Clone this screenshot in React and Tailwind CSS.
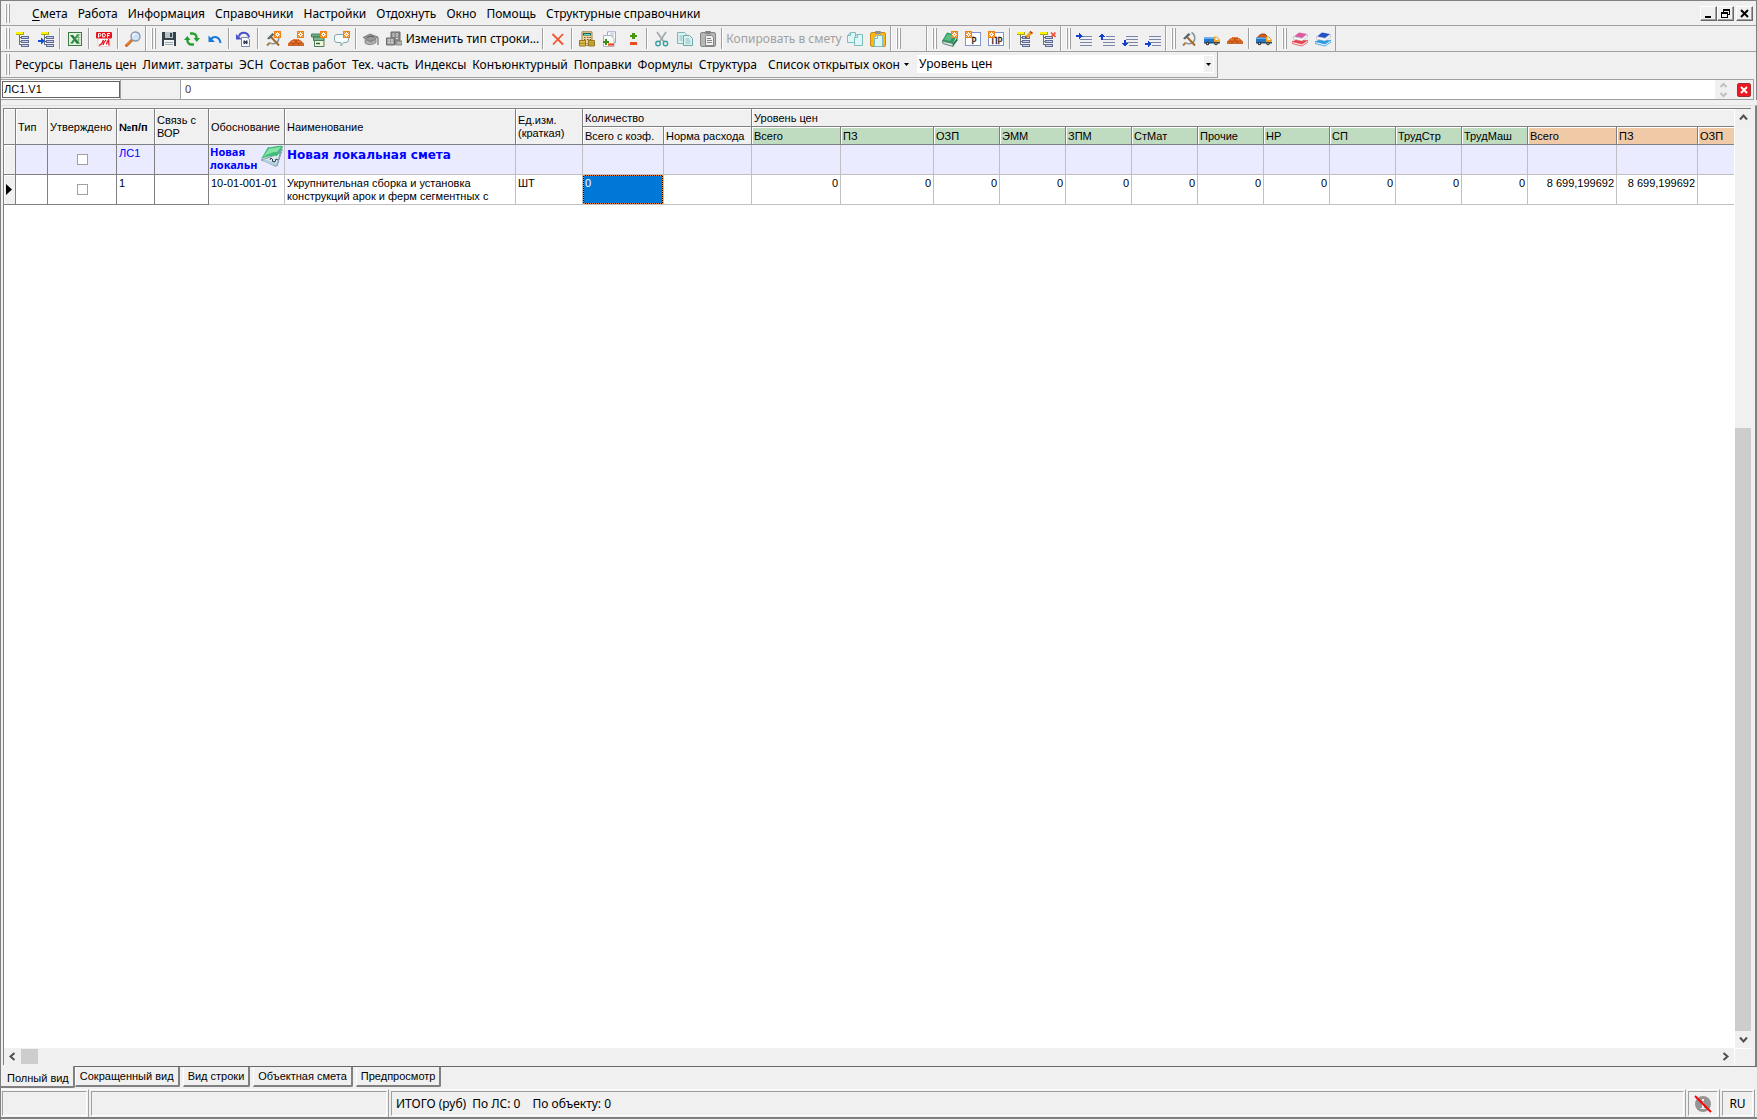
import { useState } from "react";
import clsx from "clsx";

const menuItems = ["Работа", "Информация", "Справочники", "Настройки", "Отдохнуть", "Окно", "Помощь", "Структурные справочники"];

const panelItems = [
    "Ресурсы", "Панель цен", "Лимит. затраты", "ЭСН", "Состав работ", "Тех. часть",
    "Индексы", "Конъюнктурный", "Поправки", "Формулы", "Структура",
];

const baseColumns = ["Всего", "ПЗ", "ОЗП", "ЭММ", "ЗПМ", "СтМат", "Прочие", "НР", "СП", "ТрудСтр", "ТрудМаш"];
const currentColumns = ["Всего", "ПЗ", "ОЗП"];
const currentValues = ["8 699,199692", "8 699,199692", ""];

const viewTabs = ["Полный вид", "Сокращенный вид", "Вид строки", "Объектная смета", "Предпросмотр"];

/* ---------- icons ---------- */

function Svg({ children, crisp }) {
    return (
        <svg width="16" height="16" viewBox="0 0 16 16" fill="none" shapeRendering={crisp ? "crispEdges" : "auto"} aria-hidden="true">
            {children}
        </svg>
    );
}

function Badge({ x = 9, y = 0 }) {
    return (
        <g transform={`translate(${x} ${y})`}>
            <rect width="7" height="7" fill="#f08010" />
            <path d="M3.5 1v5M1 3.5h5M1.5 1.5l4 4M5.5 1.5l-4 4" stroke="#fff" strokeWidth="0.9" />
            <rect x="3" y="3" width="1" height="1" fill="#f08010" />
        </g>
    );
}

function TreeShape({ x = 0 }) {
    return (
        <g transform={`translate(${x} 0)`} shapeRendering="crispEdges">
            <rect x="0" y="1" width="8" height="3" fill="#a8a820" />
            <rect x="0" y="1" width="7" height="2" fill="#fdf500" />
            <path d="M3.5 4v9.5M3 6.5h3M3 10.5h3M3 13.5h3" stroke="#707070" />
            <rect x="5" y="5" width="8" height="3" fill="#5d6a94" />
            <rect x="6" y="6" width="6" height="1" fill="#c8d4f4" />
            <rect x="5" y="9" width="8" height="3" fill="#5d6a94" />
            <rect x="6" y="10" width="6" height="1" fill="#c8d4f4" />
            <rect x="5" y="13" width="8" height="3" fill="#5d6a94" />
            <rect x="6" y="14" width="6" height="1" fill="#c8d4f4" />
        </g>
    );
}

const TreeIcon = () => <Svg><TreeShape x={1} /></Svg>;
const TreeArrowIcon = () => (
    <Svg>
        <TreeShape x={3} />
        <path d="M0 9h3V6.5L7 10l-4 3.5V11H0z" fill="#0f50d8" />
    </Svg>
);
const TreePencilIcon = () => (
    <Svg>
        <TreeShape />
        <path d="M8 7l1-2.5L13.5 0 16 2l-4.5 4.5z" fill="#f0a020" />
        <path d="M13 .5L15.5 2.5" stroke="#c03010" strokeWidth="1.5" />
        <path d="M8 7l.8-2 1.2 1.2z" fill="#222" />
    </Svg>
);
const TreeDeleteIcon = () => (
    <Svg>
        <TreeShape />
        <path d="M11 1.5l4.500 4.500M15.500 1.500L11 6" stroke="#f04a30" strokeWidth="1.600" />
    </Svg>
);
const ExcelIcon = () => (
    <Svg>
        <rect x="1.5" y="1.5" width="13" height="13" fill="#e6f3e4" stroke="#3c7c3e" />
        <path d="M9.5 4h4M9.5 6.5h4M9.5 9h4M9.5 12h4M11.5 3v10" stroke="#86b585" />
        <path d="M3 4h3l6.5 8.5H9.5z" fill="#1f7a36" />
        <path d="M10 3.5h2L6 12.5H3z" fill="#2f9446" />
    </Svg>
);
const PdfIcon = () => (
    <Svg>
        <path d="M2 7h9l3 3v5.500H2z" fill="#fff" stroke="#e6b4b0" strokeWidth=".6" />
        <rect x="0" y="1" width="16" height="6.500" rx="1" fill="#e8141c" />
        <path d="M2.500 6.500V2.500h1.200a1.200 1.200 0 010 2.600H2.500M6.700 2.500h1a1.600 1.600 0 010 3.500h-1zM11.500 6.500V2.500H14M11.500 4.500h2" stroke="#fff" strokeWidth="1" />
        <path d="M3 14.500c2.500-1 4-3.500 4.500-5.500M7 14c.8-2.400 2-4.400 3.200-5M10.500 13.500c.3-2 1-3.500 2-4.500l.5 5.500" stroke="#e01820" strokeWidth="1.300" />
    </Svg>
);
const SearchIcon = () => (
    <Svg>
        <path d="M6.500 9.500l-5 5" stroke="#d2691e" strokeWidth="3" strokeLinecap="round" />
        <path d="M6 9.500L2 13.500" stroke="#f4a860" strokeWidth="1" />
        <circle cx="10.500" cy="5.500" r="4.500" fill="#cfe4f8" stroke="#8a94a8" strokeWidth="1.300" />
        <path d="M7.700 5a3 3 0 013-2.500" stroke="#fff" strokeWidth="1.200" />
    </Svg>
);
const SaveIcon = () => (
    <Svg crisp>
        <path d="M1 1h13l1 1v13H1z" fill="#36424c" />
        <rect x="4" y="1" width="8" height="6" fill="#bcc4c8" />
        <rect x="9" y="2" width="2" height="4" fill="#36424c" />
        <rect x="3" y="9" width="10" height="6" fill="#f4f4f4" />
        <path d="M4 11.500h8M4 13.500h8" stroke="#9aa4aa" />
    </Svg>
);
const RefreshIcon = () => (
    <Svg>
        <path d="M6 2.500h2.500a4 4 0 014 4v1" stroke="#28a030" strokeWidth="2.400" />
        <path d="M9.500 7h6.500l-3.200 4z" fill="#28a030" />
        <path d="M10 13.500H7.500a4 4 0 01-4-4v-1" stroke="#28a030" strokeWidth="2.400" />
        <path d="M0 9h6.500L3.300 5z" fill="#28a030" />
    </Svg>
);
const UndoIcon = () => (
    <Svg>
        <path d="M4 8C7 4.500 12.500 5.500 13.500 12" stroke="#1878e0" strokeWidth="2" />
        <path d="M1.500 4.500V11h6.500z" fill="#1878e0" />
    </Svg>
);
const DocUndoIcon = () => (
    <Svg>
        <path d="M3 5.500C4 .5 12 .2 13 6.500" stroke="#4a50c8" strokeWidth="2" />
        <path d="M0 3v5.500h6z" fill="#4a50c8" />
        <path d="M5.500 6.500H11l2.500 2v7h-8z" fill="#fff" stroke="#7a84b0" />
        <path d="M7.700 9.500l3.600 3.600M11.300 9.500l-3.600 3.600M7 11.300h5" stroke="#30385c" strokeWidth="1.100" />
    </Svg>
);
const HammerShape = () => (
    <>
        <path d="M10.500 1.500c4.500 2.500 4.500 9.500-1 11-2 .5-4 0-5.500-1" stroke="#84949a" strokeWidth="1.500" />
        <path d="M2 14.500l2.500-2.500" stroke="#b57a32" strokeWidth="2" />
        <path d="M5.500 5.500L14 14.500" stroke="#a86a28" strokeWidth="2" />
        <path d="M2 7.500L7.500 2l2 1.500L4 8.500z" fill="#586a70" />
    </>
);
const HammerIcon = () => <Svg><HammerShape /></Svg>;
const HammerNewIcon = () => <Svg><HammerShape /><Badge /></Svg>;
const BricksShape = ({ y = 0 }) => (
    <g transform={`translate(0 ${y})`}>
        <path d="M0 14.500V12l2-.5V10l3-.5V8h6v1.500l3 .5v1.500l2 .5v2.500z" fill="#e87028" />
        <path d="M0 14.300h16M1 12h14M3 9.900h10M5 12v2M10.500 12v2M8 10v2M8 8v1.500" stroke="#a63f08" strokeWidth=".8" />
        <path d="M6 8.600h4M3 10.800h4M9 10.800h4" stroke="#ff9c50" strokeWidth=".6" />
    </g>
);
const BricksIcon = () => <Svg><BricksShape y={-2} /></Svg>;
const BricksNewIcon = () => <Svg><BricksShape /><Badge /></Svg>;
const BoxNewIcon = () => (
    <Svg>
        <path d="M.5 3H12v3H.5z" fill="#6fae84" stroke="#2f7048" strokeWidth=".8" />
        <path d="M2.500 6H13v3.500H2.500z" fill="#7db38f" stroke="#3d7850" />
        <path d="M3.500 9.500h9.500v6H3.500z" fill="#f2f4d8" stroke="#4c7c58" />
        <path d="M5 12.500h4" stroke="#285c38" strokeWidth="1.400" />
        <Badge />
    </Svg>
);
const BalloonNewIcon = () => (
    <Svg>
        <path d="M3 3.500h9a2.500 2.500 0 012.500 2.500v3a2.500 2.500 0 01-2.500 2.500H9.500L7 15v-3.500H3A2.500 2.500 0 01.5 9V6A2.500 2.500 0 013 3.500z" fill="#f7fdff" stroke="#86a5aa" />
        <Badge />
    </Svg>
);
const GraduationIcon = () => (
    <Svg>
        <path d="M0 6.500l7-3.500 8 3-7 4.500z" fill="#9a9a9a" stroke="#666" strokeWidth=".7" />
        <path d="M2 8.500v3.500c3 2.500 8 2 11-.5V8l-5 3z" fill="#b0b0b0" stroke="#707070" strokeWidth=".7" />
        <path d="M4 6.500l4-1.500 3 1.200M15 6.500v7.500" stroke="#555" />
    </Svg>
);
const BuildingIcon = () => (
    <Svg>
        <path d="M5 1h9v12H5z" fill="#8c8c8c" stroke="#6a6a6a" />
        <path d="M.5 7h8v7h-8z" fill="#a2a2a2" stroke="#6a6a6a" />
        <path d="M6.500 3h2M10 3h2M6.500 5h2M10 5h2M10 7.500h2M2 9h2M5 9h2M2 11.500h2M5 11.500h2" stroke="#e0e0e0" />
        <path d="M10 10h6v4h-6z" fill="#b4b4b4" stroke="#6a6a6a" strokeWidth=".7" />
    </Svg>
);
const DeleteIcon = () => (
    <Svg>
        <path d="M2.500 3L13 13.500" stroke="#f2542e" strokeWidth="1.800" />
        <path d="M13 3L3 13.500" stroke="#f2542e" strokeWidth="1.800" />
    </Svg>
);
const CalcIcon = () => (
    <Svg>
        <path d="M3 .8h10v12H3z" fill="#efd7a0" stroke="#9b8047" />
        <rect x="4" y="2" width="8" height="2.500" fill="#1c5f58" />
        <rect x="5" y="3" width="6" height="1" fill="#45e0d0" />
        <path d="M5 6.500h1.500M8 6.500h1.500M10.500 6.500h1.500M5 8.700h1.500M8 8.700h1.500M10.500 8.700h1.500" stroke="#7c6134" strokeWidth="1.200" />
        <path d="M.5 9.500h6V15h-6zM9.500 9.500h6V15h-6z" fill="#e2be45" stroke="#947522" />
        <path d="M1 12.300h5M10 11.300h5M10 13.300h5M7 14.500h2" stroke="#947522" strokeWidth=".8" />
    </Svg>
);
const DocPlusMinusIcon = () => (
    <Svg>
        <path d="M5.500.8h8v11h-8z" fill="#fff" stroke="#a0a8c4" />
        <path d="M1.500 4.500H9l3 3v8H1.500z" fill="#f8f8f8" stroke="#b0b4b8" />
        <path d="M8 3h4M9 5h3" stroke="#a0b0e0" />
        <path d="M4 8v6M1 11h6" stroke="#3b8e12" strokeWidth="2" />
        <path d="M6 13.500h6" stroke="#f0441c" strokeWidth="2.200" />
    </Svg>
);
const PlusMinusIcon = () => (
    <Svg crisp>
        <path d="M7 2h3v2h2v2h-2v2H7V6H5V4h2z" fill="#4c9412" />
        <rect x="5" y="11" width="7" height="3" fill="#ef4b20" />
    </Svg>
);
const ScissorsIcon = () => (
    <Svg>
        <path d="M3 1l7 10M12 1L5.500 11" stroke="#9fa9ac" strokeWidth="1.600" />
        <circle cx="4" cy="12.500" r="2.200" stroke="#38a0a4" strokeWidth="1.400" />
        <circle cx="11.500" cy="12.500" r="2.200" stroke="#38a0a4" strokeWidth="1.400" />
    </Svg>
);
const CopyIcon = () => (
    <Svg>
        <path d="M.5 1.500h7l2 2v9h-9z" fill="#d9f3f3" stroke="#7bb6b8" />
        <path d="M6.500 4.500h6l3 3v7h-9z" fill="#d9f3f3" stroke="#69a7aa" />
        <path d="M2.500 5h3M2.500 7h3M2.500 9h3M8.500 8h4M8.500 10h5M8.500 12h5" stroke="#8bbcbd" />
    </Svg>
);
const CopyPlainIcon = () => (
    <Svg>
        <path d="M3.500 1.500h5v10h-8v-7z" fill="#dcf7f6" stroke="#7fbcbd" />
        <path d="M9.500 3.500h6v11h-8v-8z" fill="#dcf7f6" stroke="#7fbcbd" />
        <path d="M.5 4.500h3v-3M7.500 6.500h3v-3" stroke="#7fbcbd" />
    </Svg>
);
const PasteGrayIcon = () => (
    <Svg>
        <rect x=".5" y="1.500" width="15" height="14" rx="1.500" fill="#b6b6b6" stroke="#858585" />
        <rect x="5" y="0" width="6" height="3" rx="1" fill="#858585" />
        <path d="M6.500 4.500h5l2 2v8h-8v-9z" fill="#f1f1f1" stroke="#858585" />
        <path d="M7 7.500h4M7 9.500h5M7 11.500h5" stroke="#858585" />
    </Svg>
);
const PasteIcon = () => (
    <Svg>
        <rect x=".5" y="1.500" width="15" height="14" rx="1.500" fill="#ffb60e" stroke="#c98a1b" />
        <rect x="5" y="0" width="6" height="3" rx="1" fill="#8a9094" />
        <path d="M6.500 4.500h6v11h-8v-9z" fill="#dcf7f6" stroke="#7fbcbd" />
        <path d="M4.500 7.500h3v-3" stroke="#7fbcbd" />
    </Svg>
);
const BookNewIcon = () => (
    <Svg>
        <path d="M0 10l5-8.500L15 4l-4 8.500z" fill="#2f9a62" />
        <path d="M2 8.500l4-5.500 5 2-3 5z" fill="#5cbd86" />
        <path d="M0 10l11 2.500v3L1 12.500z" fill="#dce6e0" stroke="#3c6c58" strokeWidth=".8" />
        <path d="M11 12.500L15.500 6v3.500L11 15.500z" fill="#24704a" />
        <Badge />
    </Svg>
);
function LetterIcon({ text }) {
    return (
        <Svg>
            <rect x=".5" y="1.500" width="15" height="13" fill="#fff" stroke="#8295c8" />
            <text x={9} y="13" textAnchor="middle" fontSize="8" fill="#111" stroke="#111" strokeWidth=".3" fontFamily="'DejaVu Sans', sans-serif">{text}</text>
            <Badge x={0} />
        </Svg>
    );
}
/* paragraph indent glyphs, the arrow moves around the lines */
function IndentIcon({ arrow }) {
    return (
        <Svg crisp>
            <path d="M7 5.500h9M4 8.500h12M4 11.500h12M4 14.500h12" stroke="#7a84a8" />
            <path d={arrow} fill="#1040d0" />
        </Svg>
    );
}
function IndentDownIcon({ arrow }) {
    return (
        <Svg crisp>
            <path d="M4 5.500h12M4 8.500h12M4 11.500h12M7 14.500h9" stroke="#7a84a8" />
            <path d={arrow} fill="#1040d0" />
        </Svg>
    );
}
const TruckShape = () => (
    <>
        <path d="M0 6.500h10v5H0z" fill="#2474c8" />
        <path d="M0 6.500h10v1.500H0z" fill="#63b2f4" />
        <path d="M10 5.500h3L16 9v3h-6z" fill="#f5a623" />
        <path d="M11.500 6.500H13L14.500 9h-3z" fill="#dff0ff" />
        <rect x="0" y="11" width="16" height="1.500" fill="#25517c" />
        <circle cx="3.500" cy="12.500" r="1.800" fill="#333" />
        <circle cx="12" cy="12.500" r="1.800" fill="#333" />
        <circle cx="3.500" cy="12.500" r=".7" fill="#ccc" />
        <circle cx="12" cy="12.500" r=".7" fill="#ccc" />
    </>
);
const TruckIcon = () => <Svg><TruckShape /></Svg>;
const TruckBricksIcon = () => (
    <Svg>
        <path d="M1 7l2-2.500 2.500-1.500h3.500l2 2v2z" fill="#d8561a" stroke="#8e3007" strokeWidth=".7" />
        <TruckShape />
    </Svg>
);
function BooksIcon({ top, edge }) {
    return (
        <Svg>
            <path d="M0 10.500l5-2 11 1-6 4z" fill={edge} />
            <path d="M0 10.500l10 2.500 6-4v2l-6 4L0 12.500z" fill="#f4f4f8" stroke={edge} strokeWidth=".8" />
            <path d="M2 5.500l5-4 8 1.500-5 4z" fill={top} />
            <path d="M1.500 5.500l8.500 2L15.500 3.500v2.500l-5.500 4L1.500 8z" fill="#fff" stroke="#b4b4c2" strokeWidth=".7" />
        </Svg>
    );
}

/* green open book in the estimate row */
function EstimateBook() {
    return (
        <svg width="24" height="24" viewBox="0 0 24 24" className="absolute top-0 right-0" aria-hidden="true">
            <path d="M1 15L18 8l5-7-5 18-2 3z" fill="#8ba6bb" />
            <path d="M1 15l7-2 12-5-3 13z" fill="#dce8ee" stroke="#7591a6" strokeWidth=".7" />
            <path d="M1 14L8 2c4 1 8-2 15-1l-6 10C11 10 6 12 1 14z" fill="#3dbf74" />
            <path d="M3 12L9 3.500c4 .5 8-1.500 12-1.500l-4 5C12 7 7 9 3 12z" fill="#86e2a8" />
            <path d="M3 16.500L16.500 21l1-2.500L5 14.500z" fill="#b4cede" />
            <path d="M10 15l1-2 2 2-1 1 3 1 1-3 2 1" stroke="#2c3e4c" strokeWidth="1" fill="none" />
            <path d="M17 20.500L22.500 4" stroke="#6892b0" strokeWidth="1" strokeDasharray="2 1" />
        </svg>
    );
}

function Chevron({ d, className = "text-[#505050]" }) {
    return (
        <svg width="9" height="9" viewBox="0 0 9 9" fill="none" className={className} aria-hidden="true">
            <path d={d} stroke="currentColor" strokeWidth="2" />
        </svg>
    );
}

/* ---------- toolbar parts ---------- */

function Grip() {
    return (
        <div className="flex w-1.5 shrink-0 gap-px py-0.5">
            <div className="w-0.5 border-r border-[#a0a0a0] bg-white" />
            <div className="w-0.5 border-r border-[#a0a0a0] bg-white" />
        </div>
    );
}

function Group({ first, children }) {
    return (
        <div className="flex shrink-0 border-r border-[#a0a0a0] pr-px">
            <div className={clsx("flex items-stretch border-l border-white", first ? "pl-[3px]" : "pl-1")}>
                <Grip />
                {children}
            </div>
        </div>
    );
}

const Sep = () => (
    <div className="flex w-1.5 shrink-0 py-0.5 pl-0.5">
        <div className="w-0.5 border-l border-r border-l-[#a0a0a0] border-r-white" />
    </div>
);

function IconButton({ label, icon: Icon, ...rest }) {
    return (
        <button type="button" aria-label={label} className="flex w-[23px] shrink-0 items-center justify-center">
            <Icon {...rest} />
        </button>
    );
}

function MainToolbar() {
    return (
        <div className="flex h-[26px] border-b border-[#a0a0a0]">
            <Group first>
                <IconButton label="Структура" icon={TreeIcon} />
                <IconButton label="Перейти" icon={TreeArrowIcon} />
                <Sep />
                <IconButton label="Excel" icon={ExcelIcon} />
                <Sep />
                <IconButton label="PDF" icon={PdfIcon} />
                <Sep />
                <IconButton label="Поиск" icon={SearchIcon} />
            </Group>
            <Group>
                <IconButton label="Сохранить" icon={SaveIcon} />
                <IconButton label="Обновить" icon={RefreshIcon} />
                <IconButton label="Отменить" icon={UndoIcon} />
                <Sep />
                <IconButton label="Вернуть документ" icon={DocUndoIcon} />
                <Sep />
                <IconButton label="Новая работа" icon={HammerNewIcon} />
                <IconButton label="Новый материал" icon={BricksNewIcon} />
                <IconButton label="Новое оборудование" icon={BoxNewIcon} />
                <IconButton label="Новый комментарий" icon={BalloonNewIcon} />
                <Sep />
                <IconButton label="Обучение" icon={GraduationIcon} />
                <IconButton label="Объект" icon={BuildingIcon} />
                <button type="button" className="w-[135px] shrink-0 whitespace-nowrap">Изменить тип строки...</button>
                <Sep />
                <IconButton label="Удалить" icon={DeleteIcon} />
                <Sep />
                <IconButton label="Расчет" icon={CalcIcon} />
                <IconButton label="Изменить документ" icon={DocPlusMinusIcon} />
                <IconButton label="Плюс минус" icon={PlusMinusIcon} />
                <Sep />
                <IconButton label="Вырезать" icon={ScissorsIcon} />
                <IconButton label="Копировать" icon={CopyIcon} />
                <IconButton label="Вставить" icon={PasteGrayIcon} />
                <Sep />
                <button type="button" disabled className="w-[118px] shrink-0 whitespace-nowrap text-[#a0a0a0]">Копировать в смету</button>
                <IconButton label="Копировать строки" icon={CopyPlainIcon} />
                <IconButton label="Вставить строки" icon={PasteIcon} />
            </Group>
            <Group>
                <div className="w-[23px]" />
            </Group>
            <Group>
                <IconButton label="Новая смета" icon={BookNewIcon} />
                <IconButton label="Новый раздел" icon={LetterIcon} text="Р" />
                <IconButton label="Новый подраздел" icon={LetterIcon} text="ПР" />
                <Sep />
                <IconButton label="Правка структуры" icon={TreePencilIcon} />
                <IconButton label="Удалить структуру" icon={TreeDeleteIcon} />
            </Group>
            <Group>
                <IconButton label="Вправо сверху" icon={IndentIcon} arrow="M0 4h3V2h1v1h1v1h1v1h1v1H5v1H4v1H3V6H0z" />
                <IconButton label="Вверх" icon={IndentIcon} arrow="M2 9V6H0V5h1V4h1V3h2v1h1v1h1v1H4v3z" />
                <IconButton label="Вниз" icon={IndentDownIcon} arrow="M2 9v3H0v1h1v1h1v1h2v-1h1v-1h1v-1H4V9z" />
                <IconButton label="Вправо снизу" icon={IndentDownIcon} arrow="M0 12h3v-2h1v1h1v1h1v2H5v1H4v1H3v-2H0z" />
            </Group>
            <Group>
                <IconButton label="Работы" icon={HammerIcon} />
                <IconButton label="Машины" icon={TruckIcon} />
                <IconButton label="Материалы" icon={BricksIcon} />
                <Sep />
                <IconButton label="Перевозка" icon={TruckBricksIcon} />
            </Group>
            <Group>
                <IconButton label="Красный сборник" icon={BooksIcon} top="#dc5aa0" edge="#e8424c" />
                <IconButton label="Синий сборник" icon={BooksIcon} top="#2450c8" edge="#2a9be0" />
            </Group>
        </div>
    );
}

const mdiButton = "flex h-[15px] w-[17px] items-center justify-center border border-t-white border-l-white border-r-[#696969] border-b-[#696969] bg-[#f0f0f0] shadow-[inset_-1px_-1px_0_#a0a0a0]";

function MenuBar() {
    return (
        <div className="flex h-6 items-stretch border-b border-[#a0a0a0] pl-1">
            <Grip />
            <nav className="flex flex-1 items-center pl-4">
                <button type="button" className="px-[5px]"><span className="underline underline-offset-2">С</span>мета</button>
                {menuItems.map((item) => (
                    <button type="button" key={item} className="px-[5px]">{item}</button>
                ))}
            </nav>
            <div className="flex items-center pr-[3px]">
                <button type="button" aria-label="Свернуть" className={mdiButton}>
                    <svg width="9" height="9" viewBox="0 0 9 9"><path d="M1 7h6v2H1z" /></svg>
                </button>
                <button type="button" aria-label="Восстановить" className={mdiButton}>
                    <svg width="9" height="9" viewBox="0 0 9 9" fill="none" shapeRendering="crispEdges">
                        <path d="M2 0h7v6H7V5h1V2H3v1H2z" fill="#000" />
                        <path d="M0 3h7v6H0zM1 5v3h5V5z" fill="#000" fillRule="evenodd" />
                    </svg>
                </button>
                <button type="button" aria-label="Закрыть" className={clsx(mdiButton, "ml-0.5")}>
                    <svg width="9" height="9" viewBox="0 0 9 9" fill="none"><path d="M1 1l7 7M8 1L1 8" stroke="#000" strokeWidth="2" /></svg>
                </button>
            </div>
        </div>
    );
}

function PanelBar() {
    return (
        <div className="flex h-[26px]">
            <div className="flex border-r border-b border-[#a0a0a0] pl-1">
                <Grip />
                <div className="flex pl-px">
                    {panelItems.map((item) => (
                        <button type="button" key={item} className="px-[3px] whitespace-nowrap">{item}</button>
                    ))}
                </div>
                <button type="button" className="flex items-center gap-1 px-2 whitespace-nowrap">
                    Список открытых окон
                    <svg width="5" height="3" viewBox="0 0 5 3"><path d="M0 0h5L2.500 3z" /></svg>
                </button>
                <div className="relative mt-[3px] mr-[3px] mb-1 w-[297px] bg-white">
                    <select aria-label="Уровень цен" className="h-full w-full appearance-none pl-0.5 outline-none">
                        <option>Уровень цен</option>
                    </select>
                    <span className="pointer-events-none absolute top-px right-px bottom-px flex w-[9px] items-center justify-center bg-[#f0f0f0]">
                        <svg width="5" height="3" viewBox="0 0 5 3"><path d="M0 0h5L2.500 3z" /></svg>
                    </span>
                </div>
            </div>
        </div>
    );
}

function FormulaBar() {
    const [formula, setFormula] = useState("0");

    return (
        <div className="mt-px mr-0.5 flex h-[21px] border-y border-[#a0a0a0] bg-white">
            <input aria-label="Ячейка" defaultValue="ЛС1.V1" className="my-px ml-px w-[118px] border border-[#646464] bg-white px-px font-['Liberation_Sans',sans-serif] text-[11px] outline-none" />
            <div className="w-[61px] border-x border-[#a0a0a0] bg-[#f0f0f0]" />
            <input
                aria-label="Формула"
                value={formula}
                onChange={(e) => setFormula(e.target.value)}
                className="min-w-0 flex-1 pl-1 text-[11px] text-[#5a4020] outline-none"
            />
            <div className="flex w-[39px] items-center justify-between border-r border-[#a0a0a0] bg-[#f0f0f0] pr-0.5 pl-1">
                <div className="flex flex-col">
                    <Chevron d="M1.500 6l3-3 3 3" className="text-[#c0c0c0]" />
                    <Chevron d="M1.500 3l3 3 3-3" className="text-[#c0c0c0]" />
                </div>
                <button type="button" aria-label="Закрыть" className="flex h-3.5 w-3.5 items-center justify-center rounded-xs border border-[#a03030] bg-[#f01820]">
                    <svg width="8" height="8" viewBox="0 0 8 8" fill="none"><path d="M1 1l6 6M7 1L1 7" stroke="#fff" strokeWidth="2" /></svg>
                </button>
            </div>
        </div>
    );
}

/* ---------- grid ---------- */

const headCell = "overflow-hidden border-r border-b border-[#808080] px-0.5 pt-px pb-0 text-left align-middle whitespace-nowrap shadow-[inset_1px_1px_0_#fff] last:border-r-0";
const th = clsx(headCell, "bg-[#f0f0f0] font-normal");
const thBold = clsx(headCell, "bg-[#f0f0f0] font-bold");
const thBase = clsx(headCell, "bg-[#c0dcc0] font-normal");
const thCurrent = clsx(headCell, "bg-[#f0caa6] font-normal");

const lightCell = "overflow-hidden border-r border-b border-[#c0c0c0]";
const darkCell = "overflow-hidden border-r border-b border-[#808080]";
const pad = "px-0.5 pt-0.5 pb-0 align-top";
const check = "mx-auto block h-[11px] w-[11px] appearance-none border border-[#a0a0a0] bg-white";

function EstimateTable() {
    return (
        <table className="w-full table-fixed border-separate border-spacing-0 font-['Liberation_Sans',sans-serif] text-[11px] leading-[13px]">
            <colgroup>
                <col className="w-3" />
                <col className="w-8" />
                <col className="w-[69px]" />
                <col className="w-[38px]" />
                <col className="w-[54px]" />
                <col className="w-[76px]" />
                <col className="w-[231px]" />
                <col className="w-[67px]" />
                <col className="w-[81px]" />
                <col className="w-[88px]" />
                <col className="w-[89px]" />
                <col className="w-[93px]" />
                {baseColumns.slice(2).map((name) => <col key={name} className="w-[66px]" />)}
                <col className="w-[89px]" />
                <col className="w-[81px]" />
                <col />
            </colgroup>
            <thead>
                <tr className="h-[18px]">
                    <th rowSpan={2} className={th} />
                    <th rowSpan={2} className={th}>Тип</th>
                    <th rowSpan={2} className={th}>Утверждено</th>
                    <th rowSpan={2} className={thBold}>№п/п</th>
                    <th rowSpan={2} className={th}>Связь с<br />ВОР</th>
                    <th rowSpan={2} className={th}>Обоснование</th>
                    <th rowSpan={2} className={th}>Наименование</th>
                    <th rowSpan={2} className={th}>Ед.изм.<br />(краткая)</th>
                    <th colSpan={2} className={th}>Количество</th>
                    <th colSpan={14} className={th}>Уровень цен</th>
                </tr>
                <tr className="h-[18px]">
                    <th className={th}>Всего с коэф.</th>
                    <th className={th}>Норма расхода</th>
                    {baseColumns.map((name) => (
                        <th key={name} className={thBase}>{name}</th>
                    ))}
                    {currentColumns.map((name) => (
                        <th key={name} className={thCurrent}>{name}</th>
                    ))}
                </tr>
            </thead>
            <tbody>
                <tr className="h-[30px] bg-[#ebebff]">
                    <td className={clsx(darkCell, "bg-[#f0f0f0] p-0 shadow-[inset_1px_1px_0_#fff]")} />
                    <td className={clsx(darkCell, "p-0")} />
                    <td className={clsx(darkCell, "p-0 align-middle")}>
                        <input type="checkbox" aria-label="Утверждено ЛС1" className={check} />
                    </td>
                    <td className={clsx(darkCell, pad, "text-[#0000ff]")}>ЛС1</td>
                    <td className={clsx(darkCell, "p-0")} />
                    <td className={clsx(lightCell, "p-0 align-top")}>
                        <div className="relative h-[29px] overflow-hidden pl-px font-['Noto_Sans',sans-serif] font-bold text-[#0000ff]">
                            Новая<br />локальн
                            <EstimateBook />
                        </div>
                    </td>
                    <td className={clsx(lightCell, "px-0.5 pt-1 pb-0 align-top font-['DejaVu_Sans',sans-serif] text-xs leading-[13px] font-bold whitespace-nowrap text-[#0000ff]")}>Новая локальная смета</td>
                    <td className={lightCell} />
                    <td className={lightCell} />
                    <td className={lightCell} />
                    {[...baseColumns, ...currentColumns].map((name, i) => (
                        <td key={i} className={clsx(lightCell, "last:border-r-0")} />
                    ))}
                </tr>
                <tr className="h-[30px]">
                    <td className={clsx(darkCell, "bg-[#f0f0f0] py-0 pr-0 pl-0.5 align-middle shadow-[inset_1px_1px_0_#fff]")}>
                        <svg width="6" height="11" viewBox="0 0 6 11" className="block"><path d="M0 0l6 5.500L0 11z" /></svg>
                    </td>
                    <td className={clsx(darkCell, "p-0")} />
                    <td className={clsx(darkCell, "p-0 align-middle")}>
                        <input type="checkbox" aria-label="Утверждено 1" className={check} />
                    </td>
                    <td className={clsx(darkCell, pad)}>1</td>
                    <td className={clsx(darkCell, "p-0")} />
                    <td className={clsx(lightCell, pad, "whitespace-nowrap")}>10-01-001-01</td>
                    <td className={clsx(lightCell, pad)}>Укрупнительная сборка и установка<br />конструкций арок и ферм сегментных с</td>
                    <td className={clsx(lightCell, pad)}>ШТ</td>
                    <td className={clsx(lightCell, "p-0 align-top")}>
                        <div className="h-[29px] border border-dotted border-[#ff8728] bg-black">
                            <div className="h-full bg-[#0078d7] pt-px pl-px text-white">0</div>
                        </div>
                    </td>
                    <td className={clsx(lightCell, pad)} />
                    {baseColumns.map((name) => (
                        <td key={name} className={clsx(lightCell, pad, "text-right")}>0</td>
                    ))}
                    {currentValues.map((value, i) => (
                        <td key={i} className={clsx(lightCell, pad, "text-right whitespace-nowrap last:border-r-0")}>{value}</td>
                    ))}
                </tr>
            </tbody>
        </table>
    );
}

function EstimateGrid() {
    return (
        <div className="mt-[5px] flex min-h-0 flex-1 flex-col border-t border-r-2 border-t-[#e0e0e0] border-r-[#808080] pt-0.5 pr-1 pb-px pl-0.5">
            <div className="flex min-h-0 flex-1 border-t border-l border-[#808080]">
                <div className="flex min-w-0 flex-1 flex-col">
                    <div className="min-h-0 flex-1 overflow-hidden bg-white">
                        <EstimateTable />
                    </div>
                    <div className="flex h-[17px] items-center">
                        <button type="button" aria-label="Влево" className="flex w-[17px] justify-center"><Chevron d="M6.500 1l-4 3.500 4 3.500" /></button>
                        <div className="h-[15px] w-[17px] bg-[#cdcdcd]" />
                        <div className="flex-1" />
                        <button type="button" aria-label="Вправо" className="flex w-[17px] justify-center"><Chevron d="M2.500 1l4 3.500-4 3.500" /></button>
                    </div>
                </div>
                <div className="flex w-[17px] flex-col border-l border-white">
                    <button type="button" aria-label="Вверх" className="flex h-[17px] items-center justify-center"><Chevron d="M1 6.500l3.500-4 3.500 4" /></button>
                    <div className="flex-1" />
                    <div className="flex-[2] bg-[#cdcdcd]" />
                    <button type="button" aria-label="Вниз" className="flex h-[17px] items-center justify-center"><Chevron d="M1 2.500l3.500 4 3.500-4" /></button>
                    <div className="h-[17px] border-t border-white" />
                </div>
            </div>
        </div>
    );
}

function ViewTabs() {
    const [active, setActive] = useState(viewTabs[0]);

    return (
        <div className="flex h-[23px] shrink-0 items-start gap-[3px] border-t border-[#696969] font-['Liberation_Sans',sans-serif] text-[11px]">
            {viewTabs.map((tab) => (
                <button
                    type="button"
                    key={tab}
                    onClick={() => setActive(tab)}
                    className={clsx(
                        "rounded-br-xs border-r-2 border-b-2 border-[#808080] bg-[#f0f0f0] whitespace-nowrap",
                        tab === active ? "-mt-px -mr-[3px] h-[22px] pt-1 pr-1 pl-1.5" : "h-5 border-l border-l-white px-1"
                    )}
                >
                    {tab}
                </button>
            ))}
        </div>
    );
}

function StatusPanel({ className, children }) {
    return (
        <div className={clsx("flex border-t border-r border-t-white border-r-[#a0a0a0] py-px pr-px pl-px", className)}>
            <div className="flex flex-1 items-center border border-t-[#a0a0a0] border-r-white border-b-white border-l-[#a0a0a0]">{children}</div>
        </div>
    );
}

function StatusBar() {
    return (
        <div className="flex h-[30px] shrink-0 gap-px border-b-2 border-b-[#808080] pr-0.5">
            <StatusPanel className="w-[88px]" />
            <StatusPanel className="w-[299px]" />
            <StatusPanel className="min-w-0 flex-1">
                <div className="flex pl-1">
                    <span>ИТОГО (руб)</span>
                    <span className="pl-1.5">По ЛС: 0</span>
                    <span className="pl-3">По объекту: 0</span>
                </div>
            </StatusPanel>
            <StatusPanel className="w-[33px]">
                <svg width="18" height="18" viewBox="0 0 18 18" className="mx-auto" fill="none" aria-hidden="true">
                    <circle cx="9" cy="9" r="8" fill="#949494" />
                    <path d="M8 4h2v2H8zM7 7.500h3V13h1.500v1h-5v-1H8V9H7z" fill="#efefef" />
                    <path d="M1 1l16 16" stroke="#f00" strokeWidth="2" />
                </svg>
            </StatusPanel>
            <StatusPanel className="w-[34px]">
                <span className="mx-auto">RU</span>
            </StatusPanel>
        </div>
    );
}

export default function App() {
    return (
        <div className="flex h-screen flex-col overflow-hidden border-t border-l border-[#808080] bg-[#f0f0f0] pb-px font-['Noto_Sans',sans-serif] text-xs text-black">
            <div className="border-r border-[#808080] pt-px">
                <MenuBar />
                <MainToolbar />
                <PanelBar />
                <FormulaBar />
            </div>
            <EstimateGrid />
            <ViewTabs />
            <StatusBar />
        </div>
    );
}
